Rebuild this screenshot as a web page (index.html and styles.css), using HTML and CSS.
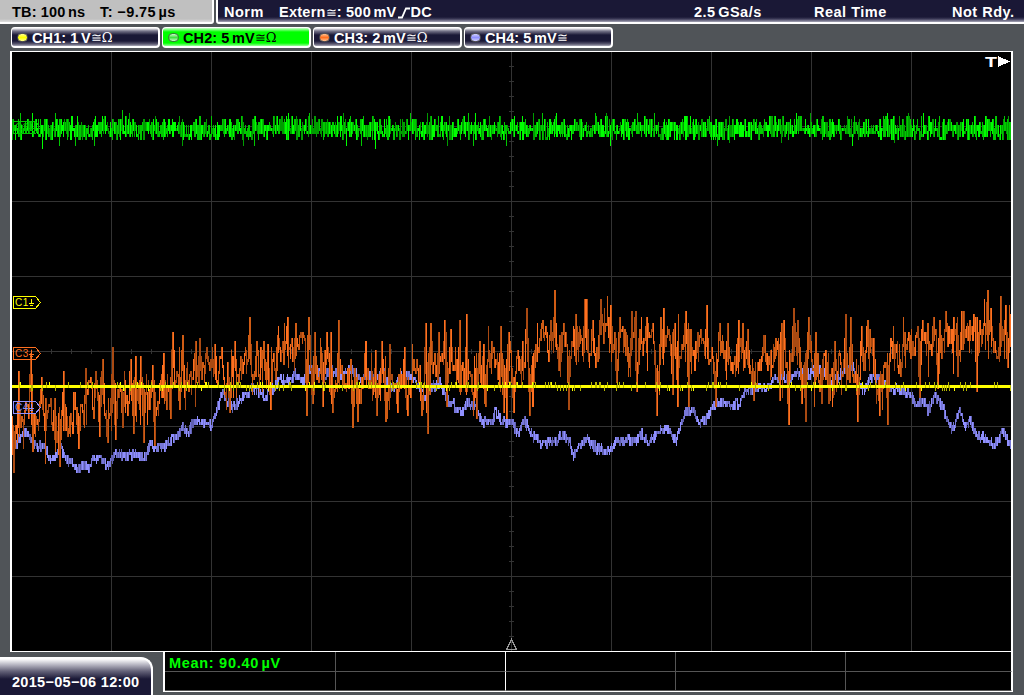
FILE: index.html
```
<!DOCTYPE html>
<html lang="en">
<head>
    <meta charset="UTF-8">
    <meta name="viewport" content="width=device-width, initial-scale=1.0">
    <title>Oscilloscope</title>
    <link rel="stylesheet" href="styles.css">
</head>
<body>
    <header class="topbar">
        <div class="timebase">
            <span class="tb">TB: 100<i></i>ns</span>
            <span>T: −9.75<i></i>µs</span>
        </div>
        <div class="status">
            <span>Norm</span>
            <span class="trigger">Extern<b class="sym">≅</b>: <em>500<i></i>mV</em><svg class="edge" width="13" height="12" viewBox="0 0 13 12"><path d="M0 10.5H4L8 1.5H12" fill="none" stroke="#fff" stroke-width="1.8"/></svg>DC</span>
            <span>2.5<i></i>GSa/s</span>
            <span>Real Time</span>
            <span>Not Rdy.</span>
        </div>
    </header>

    <nav class="channels">
        <div class="channel ch1"><span class="led"></span>CH1: 1<i></i>V<b class="sym">≅Ω</b></div>
        <div class="channel ch2 active"><span class="led"></span>CH2: 5<i></i>mV<b class="sym">≅Ω</b></div>
        <div class="channel ch3"><span class="led"></span>CH3: 2<i></i>mV<b class="sym">≅Ω</b></div>
        <div class="channel ch4"><span class="led"></span>CH4: 5<i></i>mV<b class="sym">≅</b></div>
    </nav>

    <main class="plot">
        <svg class="screen" width="999" height="599" viewBox="12 52 999 599" shape-rendering="crispEdges">
            <path id="grid" class="grid"/>
            <g id="traces"></g>
            <g id="markers"></g>
            <path class="trigger-pos" d="M511.5 639.5L506.5 649.5H516.5Z"/>
            <text class="trigger-level" x="985" y="67" textLength="12" lengthAdjust="spacingAndGlyphs">T</text>
            <path d="M998 56V67L1010 61.5Z" fill="#fff"/>
        </svg>
    </main>

    <footer class="bottom">
        <div class="clock">2015−05−06 12:00</div>
        <div class="measures">
            <div class="cell mean">Mean: 90.40<i></i>µV</div>
            <div class="cell mid"></div>
            <div class="cell"></div>
            <div class="cell"></div>
            <div class="cell last"></div>
            <div class="cell"></div>
            <div class="cell mid"></div>
            <div class="cell"></div>
            <div class="cell"></div>
            <div class="cell last"></div>
        </div>
    </footer>
    <script src="script.js"></script>
</body>
</html>
```

FILE: styles.css
```
*{
    box-sizing: border-box;
}
body{
    margin: 0;
    width: 1024px;
    height: 695px;
    overflow: hidden;
    background-color: #505458;
    color: #fff;
    font: bold 14.5px "Liberation Sans", Arial, sans-serif;
    letter-spacing: 0.5px;
    white-space: nowrap;
}
i{
    display: inline-block;
    width: 2.5px;
}
em{
    font-style: normal;
}
.sym{
    font: 13px "DejaVu Serif", serif;
    letter-spacing: 0;
}
.topbar{
    display: flex;
    height: 24px;
    gap: 2px;
}
.timebase{
    width: 214px;
    height: 24px;
    padding-left: 12px;
    display: flex;
    line-height: 24px;
    color: #000;
    background: linear-gradient(#c0c0c0 19px, #e0e0e0 22px, #fff 22px);
    border-right: 2px solid #fff;
    border-bottom-right-radius: 3px;
    letter-spacing: 0.15px;
}
.tb{
    width: 88px;
}
.timebase span + span{
    letter-spacing: 0.4px;
}
.status{
    flex: 1;
    display: grid;
    grid-template-columns: 55px 415px 120px 138px 1fr;
    padding-left: 6px;
    line-height: 24px;
    background: linear-gradient(#1a1836 17px, #3c3a58 19px, #a8a7b8 22px, #fff 22px);
    border-left: 2px solid #fff;
    border-bottom-left-radius: 3px;
}
.trigger{
    letter-spacing: 0.25px;
}
.edge{
    margin: 0 0 -2px 1px;
}
.channels{
    display: flex;
    gap: 2px;
    padding: 3px 0 0 11px;
    height: 27px;
}
.channel{
    width: 149px;
    height: 21px;
    display: flex;
    align-items: center;
    padding: 1px 0 0 5px;
    border: 2px solid #fff;
    border-width: 1px 2px 2px 1px;
    border-radius: 4px;
    letter-spacing: 0.1px;
    background: linear-gradient(#fff, #77758a 3px, #1a1836 7px, #1a1836 13px, #5b5970 16px, #aaa9b8);
}
.channel.active{
    color: #000;
    background: linear-gradient(#ccffcc, #00ff00 4px, #00ff00 15px, #99ff99);
}
.led{
    width: 11px;
    height: 9px;
    margin-right: 4px;
    border: 1px solid #555;
    border-radius: 5px;
}
.ch1 .led{
    background: linear-gradient(#ffff90, #ffff00, #ffff90);
}
.ch2 .led{
    background: linear-gradient(#c8ffc8, #40e040, #c8ffc8);
    border-color: #3c6e3c;
}
.ch3 .led{
    background: linear-gradient(#ffc090, #ff7020, #ffc090);
}
.ch4 .led{
    background: linear-gradient(#d0d0ff, #9090ff, #d0d0ff);
}
.plot{
    margin-left: 10px;
    width: 1003px;
    height: 601px;
    background-color: #000;
    border: 2px solid #fff;
    border-width: 1px 2px;
}
.screen{
    display: block;
}
.grid{
    fill: none;
    stroke: #333;
}
.trigger-pos{
    fill: none;
    stroke: #999;
}
.trigger-level{
    fill: #fff;
    font-size: 15px;
    letter-spacing: 0;
}
.marker-text{
    font-size: 10px;
    font-weight: normal;
    letter-spacing: 0.5px;
}
.bottom{
    display: flex;
    height: 43px;
    gap: 10px;
}
.clock{
    width: 153px;
    height: 38px;
    margin-top: 5px;
    padding-left: 12px;
    line-height: 47px;
    letter-spacing: 0.3px;
    background: linear-gradient(#fff, #c0bfca 5px, #66647a 12px, #1a1836 20px);
    border-top: 2px solid #fff;
    border-right: 2px solid #fff;
    border-top-right-radius: 12px;
}
.measures{
    display: grid;
    grid-template-columns: 171px 170px 170px 170px 166px;
    grid-template-rows: 20px 19px;
    width: 850px;
    height: 40px;
    background-color: #000;
    border-left: 2px solid #fff;
    border-right: 1px solid #fff;
    border-bottom: 1px solid #fff;
}
.cell{
    border-right: 1px solid #555;
    border-bottom: 1px solid #555;
}
.cell.mid{
    border-right-color: #fff;
}
.cell.last{
    border-right: 1px solid #fff;
}
.mean{
    color: #00ff00;
    padding-left: 4px;
    line-height: 23px;
    letter-spacing: 0.7px;
}
```

FILE: script.js
```
const LEFT = 12;
const RIGHT = 1011;

let seed = 20150506;
function rnd() {
    seed = (seed * 1664525 + 1013904223) % 4294967296;
    return seed / 4294967296;
}

// Linear interpolation through a list of [x, y, x, y, ...]
function level(points, x) {
    if (x <= points[0]) return points[1];
    for (let i = 2; i < points.length; i += 2) {
        if (x <= points[i]) {
            const t = (x - points[i - 2]) / (points[i] - points[i - 2]);
            return points[i - 1] + t * (points[i + 1] - points[i - 1]);
        }
    }
    return points[points.length - 1];
}

function addPath(d, color) {
    const path = document.createElementNS("http://www.w3.org/2000/svg", "path");
    path.setAttribute("d", d);
    path.setAttribute("fill", color);
    document.getElementById("traces").appendChild(path);
}

// One vertical bar per column, on a 3px level raster.
// value(x) gives the samples that fall in the column.
function drawTrace(value, bright, dark, mix) {
    let paths = ["", "", ""];
    let prev = value(LEFT)[0];
    for (let x = LEFT; x < RIGHT; x++) {
        const samples = value(x);
        const a = Math.round(Math.min(prev, ...samples) / 3) * 3 - 1;
        const b = Math.round(Math.max(prev, ...samples) / 3) * 3 + 2;
        const r = rnd();
        const k = r < mix ? 0 : r < mix + 0.4 ? 1 : 2;
        paths[k] += `M${x} ${a}h1V${b}h-1z`;
        prev = samples[samples.length - 1];
    }
    addPath(paths[0], bright);
    addPath(paths[1], dark[0]);
    addPath(paths[2], dark[1]);
}

let grid = "";
for (let x = 111.5; x < RIGHT; x += 100) grid += `M${x} 52V651`;
for (let y = 126.5; y < 651; y += 75) grid += `M12 ${y}H1011`;
for (let x = 31.5; x < RIGHT; x += 20) grid += `M${x} 349V354`;
for (let y = 66.5; y < 651; y += 15) grid += `M509 ${y}H514`;
document.getElementById("grid").setAttribute("d", grid);

const blue = [12,445,16,442,22,432,26,432,30,438,36,446,44,446,50,461,54,457,60,446,65,458,72,464,78,467,
    84,464,88,467,94,457,102,460,108,465,114,454,125,455,138,453,142,458,150,445,163,448,170,439,177,437,
    182,426,188,432,192,421,208,421,211,426,219,400,222,392,227,403,232,407,240,400,246,394,252,388,258,391,
    264,397,272,388,280,379,288,380,295,374,303,382,308,370,316,371,322,375,330,371,342,375,348,368,355,373,
    361,382,366,373,374,376,382,369,388,387,394,388,402,373,410,376,416,383,424,397,430,388,440,382,446,398,
    452,403,460,412,466,404,474,406,482,421,490,423,495,410,500,420,511,422,518,435,524,420,530,432,540,443,
    552,442,562,434,568,440,573,455,580,445,586,438,596,448,606,450,616,442,630,440,634,442,641,433,649,442,
    660,429,668,429,676,440,684,411,690,409,698,421,705,420,712,405,718,402,730,404,738,403,744,391,750,391,
    756,387,764,388,770,383,780,372,788,381,796,372,808,373,816,369,822,369,829,381,837,378,845,364,853,368,
    858,382,864,390,870,376,880,377,888,388,896,390,904,392,909,391,915,404,921,400,928,410,934,395,942,406,
    948,424,952,429,958,410,965,427,970,420,975,433,985,439,992,444,998,440,1002,430,1010,444];

const orange = [12,425,30,400,60,430,75,408,100,402,130,402,160,392,180,375,200,367,230,375,260,370,300,358,
    340,370,370,385,410,377,440,370,475,375,500,370,520,362,550,345,600,348,640,347,680,350,720,352,760,365,
    800,353,830,372,870,355,880,372,910,352,950,340,1010,338];

// Highest and lowest excursions of channel 3
const spikes = [13,472,18,373,30,353,32,450,41,377,45,400,54,400,59,465,63,373,67,435,78,448,85,370,95,373,
    99,435,102,361,107,441,112,349,115,439,122,426,130,361,133,433,135,358,140,358,143,440,152,367,154,444,
    163,355,170,418,172,334,179,408,182,337,195,343,199,340,206,349,214,346,229,411,234,343,245,351,249,319,
    256,343,263,343,267,346,270,409,277,337,287,319,295,325,302,334,306,413,308,319,312,403,314,334,322,406,
    326,334,330,334,332,412,338,322,352,426,357,420,365,343,375,352,376,415,381,343,385,420,389,346,397,412,
    404,349,407,415,421,415,425,325,427,433,430,325,438,334,444,322,446,406,450,331,459,322,466,316,476,418,
    479,343,483,346,485,406,491,343,500,328,503,411,506,418,508,334,513,411,522,343,526,310,529,415,532,405,
    540,337,545,328,550,322,554,292,559,337,568,409,575,316,579,331,584,301,586,301,592,322,600,301,605,325,
    610,307,616,382,619,319,626,337,631,313,635,313,636,391,639,331,646,319,656,415,660,319,663,310,668,331,
    672,394,677,406,685,313,688,406,695,343,700,331,706,307,715,406,719,325,727,325,738,322,742,325,747,331,
    753,400,763,337,775,340,779,400,781,325,783,322,788,424,793,310,797,322,801,401,805,421,808,319,815,334,
    821,403,825,352,828,403,834,343,845,316,850,319,857,421,861,328,867,322,869,331,873,340,879,415,887,424,
    890,340,895,345,904,334,908,334,917,328,919,397,922,322,927,325,933,319,937,388,939,322,945,313,953,319,
    957,376,961,313,963,313,969,322,973,316,976,391,979,322,987,292,990,310,1000,298,1005,307,1007,365,1010,316];
const spikeAt = {};
for (let i = 0; i < spikes.length; i += 2) spikeAt[spikes[i]] = spikes[i + 1];

const greenSpikes = {20: 115, 32: 115, 42: 146, 55: 115, 59: 143, 75: 143, 94: 143, 122: 110, 129: 115,
    182: 143, 243: 143, 254: 143, 288: 115, 309: 115, 343: 113, 346: 143, 361: 143, 375: 146, 410: 113,
    427: 115, 447: 143, 468: 113, 473: 143, 475: 115, 506: 143, 533: 115, 542: 113, 556: 113, 595: 113,
    606: 115, 610: 143, 637: 113, 654: 115, 690: 116, 717: 145, 729: 141, 781: 141, 796: 115, 810: 115,
    852: 143, 887: 115, 894: 141, 908: 115, 923: 115, 1004: 116};
drawTrace(x => {
    const samples = [127 - Math.pow(rnd(), 1.5) * 10, 127.5 + Math.pow(rnd(), 1.3) * 11];
    if (rnd() < 0.25) samples.shift();
    if (rnd() < 0.5) samples.reverse();
    if (greenSpikes[x]) samples.unshift(greenSpikes[x]);
    return samples;
}, "#00ff00", ["#00c800", "#009c00"], 0.32);

drawTrace(x => {
    const y = level(blue, x);
    return [y + (rnd() - 0.5) * 9, y + (rnd() - 0.5) * 9];
}, "#9090ff", ["#7777d8", "#6060b0"], 0.4);

let drift = 0;
drawTrace(x => {
    drift = drift * 0.6 + (rnd() - 0.5) * 32;
    const y = level(orange, x) + drift;
    const samples = [y];
    if (rnd() < 0.4) samples.unshift(y + (rnd() - 0.5) * 50);
    const before = spikeAt[x + 1];
    const after = spikeAt[x - 1];
    if (before) samples.push(y * 0.45 + before * 0.55);
    if (spikeAt[x]) samples.push(spikeAt[x]);
    else if (after) samples.push(y * 0.6 + after * 0.4);
    return samples;
}, "#ff7020", ["#d05c14", "#aa4a12"], 0.22);

let line = "M12 385H1011V388H12z";
let fuzz = "";
for (let x = LEFT; x < RIGHT; x++) {
    const r = rnd();
    if (r < 0.11) fuzz += `M${x} 382h1v6h-1z`;
    else if (r < 0.18) fuzz += `M${x} 385h1v6h-1z`;
    else if (r < 0.2) line += `M${x} 382h1v6h-1z`;
    else if (r < 0.22) line += `M${x} 385h1v6h-1z`;
}
addPath(line, "#ffff00");
addPath(fuzz, "#b8b800");

// Ground markers of the channels
const markers = [["C1", 302, "#ffff00"], ["C2", 127, "#00c800"], ["C3", 353, "#ff7020"], ["C4", 407, "#9090ff"]];
document.getElementById("markers").innerHTML = markers.map(([name, y, color]) => `
    <path d="M13.5 ${y - 5.5}H35.5L40.5 ${y + 0.5}L35.5 ${y + 6.5}H13.5Z" fill="none" stroke="${color}"/>
    <text class="marker-text" x="15" y="${y + 4}" fill="${color}">${name}</text>
    <path d="M31.5 ${y - 3}V${y + 2}M29 ${y + 1.5}H34M30 ${y + 3.5}H33" fill="none" stroke="${color}"/>`).join("");
```
